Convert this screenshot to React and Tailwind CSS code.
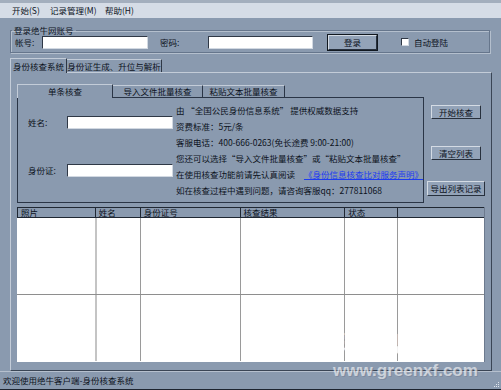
import React from 'react';

const COLS = [
  { label: "照片", w: 78 },
  { label: "姓名", w: 45 },
  { label: "身份证号", w: 100 },
  { label: "核查结果", w: 105 },
  { label: "状态", w: 53 },
  { label: "", w: 87 },
];

const INFO = [
  "由 “全国公民身份信息系统” 提供权威数据支持",
  "资费标准：5元/条",
  "客服电话：400-666-0263(免长途费 9:00-21:00)",
  "您还可以选择“导入文件批量核查”或“粘贴文本批量核查”",
  null,
  "如在核查过程中遇到问题，请咨询客服qq：277811068",
];

function Input({ w }) {
  return (
    <div
      className="h-[13px] bg-white border border-t-[#2f3846] border-l-[#2f3846] border-r-[#d2d9e2] border-b-[#d2d9e2]"
      style={{ width: w }}
    />
  );
}

function Btn({ children, w, h = 14, dark }) {
  return (
    <div
      className={`flex items-center justify-center bg-[#93a3b8] border border-t-[#d4dbe4] border-l-[#d4dbe4] border-r-[#27303d] border-b-[#27303d] ${dark ? "outline outline-1 outline-[#111820]" : ""}`}
      style={{ width: w, height: h }}
    >
      {children}
    </div>
  );
}

export default function App() {
  return (
    <div className="relative w-[501px] h-[390px] overflow-hidden bg-[#8a9aaf] text-[#0c121c] text-[8.5px] leading-none font-['Noto_Sans_CJK_SC','Noto_Sans',sans-serif] flex flex-col">
      {/* menu bar */}
      <div className="h-[18px] shrink-0 border-t-[3px] border-t-[#a3aebd] bg-[#d5dce6] flex items-center pl-[12px]">
        <span className="w-[38px]">开始(S)</span>
        <span className="w-[55px]">记录管理(M)</span>
        <span>帮助(H)</span>
      </div>

      {/* login group */}
      <fieldset className="mt-[7px] mx-[10px] w-[480px] shrink-0 border border-[#66768c] shadow-[inset_1px_1px_0_#b4bfcd,1px_1px_0_#b4bfcd] pb-[3px]">
        <legend className="ml-[1px] px-[2px] h-[10px] leading-[10px]">登录绝牛网账号</legend>
        <div className="flex items-center h-[14px] pl-[4px]">
          <span className="w-[27px]">帐号:</span>
          <Input w={106} />
          <span className="ml-[12px] w-[48px]">密码:</span>
          <Input w={105} />
          <div className="ml-[15px]">
            <Btn w={49} h={15} dark>登录</Btn>
          </div>
          <div className="ml-[24px] w-[8px] h-[8px] bg-white border border-t-[#2f3846] border-l-[#2f3846] border-r-[#d2d9e2] border-b-[#d2d9e2]" />
          <span className="ml-[5px]">自动登陆</span>
        </div>
      </fieldset>

      {/* outer tabs */}
      <div className="mt-[5px] mx-[10px] h-[14px] shrink-0 flex items-end">
        <div className="relative z-10 -mb-px h-[15px] w-[57px] flex items-center justify-center bg-[#8a9aaf] border-l border-t border-[#c3ccd8] border-r border-r-[#2f3846]">
          身份核查系统
        </div>
        <div className="h-[13px] w-[95px] flex items-center justify-center border-t border-[#c3ccd8] border-r border-r-[#2f3846]">
          身份证生成、升位与解析
        </div>
      </div>

      {/* outer panel */}
      <div className="mx-[10px] w-[482px] h-[299px] shrink-0 border-l border-t border-[#c3ccd8] border-r border-b border-r-[#3a4555] border-b-[#3a4555] pl-[6px] pt-[11px]">
        <div className="flex h-[119px]">
          <div className="w-[407px] flex flex-col">
            {/* inner tabs */}
            <div className="flex h-[13px] items-end">
              <div className="relative z-10 -mb-px h-[14px] w-[96px] flex items-center justify-center bg-[#8a9aaf] border-l border-t border-[#c3ccd8] border-r border-r-[#2a3546]">
                单条核查
              </div>
              <div className="h-[12px] w-[90px] flex items-center justify-center border-t border-[#c3ccd8] border-r border-r-[#2a3546]">
                导入文件批量核查
              </div>
              <div className="h-[12px] w-[82px] flex items-center justify-center border-t border-[#c3ccd8] border-r border-r-[#2a3546]">
                粘贴文本批量核查
              </div>
            </div>
            {/* inner panel */}
            <div className="h-[106px] border border-[#2a3546] flex">
              <div className="w-[166px] flex flex-col">
                <div className="mt-[18px] flex items-center pl-[10px]">
                  <span className="w-[39px]">姓名:</span>
                  <Input w={106} />
                </div>
                <div className="mt-[35px] flex items-center pl-[10px]">
                  <span className="w-[39px]">身份证:</span>
                  <Input w={106} />
                </div>
              </div>
              <div className="flex flex-col pt-[4px]">
                {INFO.map((t, i) => (
                  <div key={i} className="h-[16px] flex items-center whitespace-nowrap">
                    {t ?? (
                      <>
                        在使用核查功能前请先认真阅读
                        <span className="ml-[9px] text-[#1d3cf0] underline">《身份信息核查比对服务声明》</span>
                      </>
                    )}
                  </div>
                ))}
              </div>
            </div>
          </div>
          {/* right buttons */}
          <div className="ml-[3px] w-[58px] flex flex-col items-center">
            <div className="mt-[21px]"><Btn w={50}>开始核查</Btn></div>
            <div className="mt-[27px]"><Btn w={50}>清空列表</Btn></div>
            <div className="mt-[21px]"><Btn w={58} h={15}>导出列表记录</Btn></div>
          </div>
        </div>

        {/* result list */}
        <div className="mt-[4px] w-[468px] h-[155px] flex flex-col bg-white border-r border-[#6c7a8e]">
          <div className="h-[11px] flex bg-[#8a9aaf] border-t border-b border-[#1f2732]">
            {COLS.map((c, i) => (
              <div
                key={i}
                className="h-full flex items-center pl-[3px] border-l border-[#1f2732]"
                style={{ width: c.w }}
              >
                {c.label}
              </div>
            ))}
          </div>
          {[78, 66].map((h, r) => (
            <div key={r} className={`flex ${r === 0 ? "border-b border-[#8e8e8e]" : ""}`} style={{ height: h - (r === 0 ? 1 : 0) }}>
              {COLS.map((c, i) => (
                <div
                  key={i}
                  className={`h-full ${i === 0 ? "" : "border-l"} ${i === 1 ? "border-l-2 border-[#c4c4c4]" : "border-[#9a9a9a]"}`}
                  style={{ width: c.w }}
                />
              ))}
            </div>
          ))}
        </div>
      </div>

      {/* status bar */}
      <div className="relative h-[19px] shrink-0 border-t border-[#b6c0ce] border-b border-b-[#1d2430] flex items-center pl-[3px]">
        欢迎使用绝牛客户端-身份核查系统
        <div className="absolute right-[2px] bottom-[2px] grid grid-cols-3 gap-[1px]">
          {[0, 1, 2, 3, 4, 5, 6, 7, 8].map((k) => (
            <div key={k} className={`w-[1px] h-[1px] ${[2, 4, 5, 6, 7, 8].includes(k) ? "bg-[#e0e6ee]" : ""}`} />
          ))}
        </div>
      </div>

      {/* watermark */}
      <div className="pointer-events-none absolute left-[333px] top-[322px] flex flex-col items-start gap-[8px]">
        <span className="text-[30px] leading-[32px] tracking-[8px] font-bold text-white/50 [text-shadow:0_0_1px_rgba(255,255,255,0.8)]">绿色先锋</span>
        <span className="text-[17px] leading-[17px] font-bold font-['Liberation_Sans',sans-serif] text-white/60 [text-shadow:1px_1px_0_rgba(120,130,150,0.6)]">www.greenxf.com</span>
      </div>
    </div>
  );
}
